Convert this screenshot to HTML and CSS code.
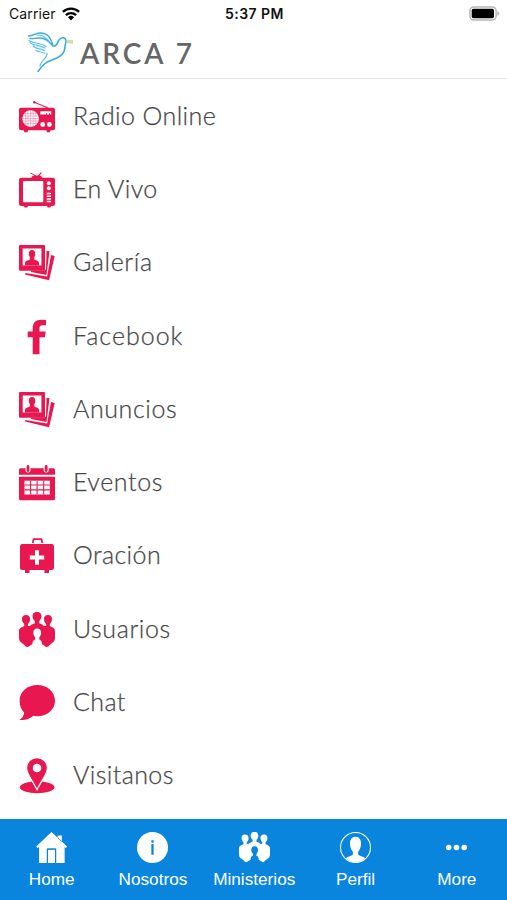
FILE: index.html
```html
<!DOCTYPE html>
<html lang="es">
<head>
    <meta charset="UTF-8">
    <meta name="viewport" content="width=device-width, initial-scale=1.0">
    <title>ARCA 7</title>
    <link rel="stylesheet" href="styles.css">
</head>
<body>
    <!-- Shared icon shapes -->
    <svg class="symbols" width="0" height="0">
        <symbol id="photos" viewBox="0 0 36 36">
            <path fill="currentColor" d="M27.5 5.700l3 .5-3 23.700L12 27v-1.500h13l2-1z"/>
            <path fill="currentColor" d="M32 10l3.700.9-5.600 24.400L6 29.500l.4-1.600 21.700 3.700z"/>
            <rect width="26" height="25.700" rx="1" fill="currentColor"/>
            <rect x="3.700" y="3.500" width="18.700" height="17" fill="#fff"/>
            <path fill="currentColor" d="M6 20.500v-2.400c0-1.800 1.200-2.200 4.900-3.600v-2.400C9.400 10.300 9 5 13 5s3.700 5.300 2.300 7.100v2.400c3.600 1.400 4.800 1.800 4.800 3.600v2.400z"/>
        </symbol>
        <symbol id="people" viewBox="0 0 36 36">
            <path fill="currentColor" d="M5.200 14.300V12C2.200 9.500 1.700 3 7 3s4.900 6.500 2 9v2l2.500-.3c1-1.400 3-2 4.300-2.500V9C12.500 6.500 12.500-.2 18-.2S23.500 6.500 20.300 9v2.200c1.300.5 3.300 1.100 4.300 2.500l2.500.3v-2c-2.900-2.500-3.400-9 1.900-9s4.800 6.500 1.900 9v2.300c4.200 1.500 5.100 2.600 5.100 5.200v6.800c0 3-2.200 4.200-4.500 6-1.700 1.400-2.200 2.700-3.800 2.700-1.400 0-2.500-1.700-4.700-2.700 0-2.800-.7-3.800-2.700-4.700v-2.400c2.900-2.900 2.400-8.600-2.100-8.600s-5 5.700-2.100 8.600v2.400c-2 .9-2.700 1.900-2.700 4.700-2.200 1-3.700 2.700-5.100 2.700-1.600 0-2.100-1.300-3.800-2.700C2.200 30.500 0 29.300 0 26.300v-6.800c0-2.600.9-3.700 5.200-5.200z"/>
        </symbol>
    </svg>

    <header>
        <div class="status-bar">
            <div class="carrier">
                <span>Carrier</span>
                <svg width="18" height="14" viewBox="0 0 18 14">
                    <g fill="none" stroke="#000" stroke-width="2.300">
                        <path d="M.9 4.900a11.700 11.700 0 0 1 16.200 0"/>
                        <path d="M3.900 8.100a7.400 7.400 0 0 1 10.200 0"/>
                    </g>
                    <path d="M6 10.200a4.300 4.300 0 0 1 6 0l-3 3.300z"/>
                </svg>
            </div>
            <div class="time">5:37 PM</div>
            <div class="battery">
                <svg width="31" height="15" viewBox="0 0 31 15">
                    <rect x=".9" y=".9" width="26.200" height="13.200" rx="4" fill="#fff" stroke="#b5b5b5" stroke-width="1.500"/>
                    <rect x="2.700" y="2.800" width="22.300" height="9.400" rx="1.700"/>
                    <path fill="#b5b5b5" d="M28.300 5.200q2 .6 2 2.300t-2 2.300z"/>
                </svg>
            </div>
        </div>
        <div class="brand">
            <svg width="48" height="42" viewBox="0 0 48 42" fill="none" stroke="#36a9e8" stroke-linecap="round">
                <path stroke-width="1.300" d="M1.500 4C7 4 8 1 13 1c8 0 11 5 13 13-4-5-8-8-13-8C8 6 6 7 3 6.500"/>
                <path stroke-width="1.100" stroke="#55b9ec" d="M10 3c6-.5 10 3 13 8M2 8.500c5 3.500 11 1.500 17 6"/>
                <path stroke-width="1.200" stroke="#5bc0ee" d="M3 10c2 4 8 2.500 15 6M6 14c3 3.500 7 2 12 4.500M9 18.500c3 2 6 1 9 3"/>
                <path stroke-width="1.500" d="M26 14c4 1 4-3 6-6 2-3 6-3 7 .5.500 2-1 3-1 6 0 7-5 11-13 13.500-7 2-10 6-14 11.500"/>
                <path stroke-width="1.200" stroke="#5bc0ee" d="M20 21c1 5-7 8-7 13"/>
                <path stroke="none" fill="#d5dfa0" d="M39.500 7.500l6.500.5v4l-6-1z"/>
            </svg>
            <span>ARCA 7</span>
        </div>
    </header>

    <main class="menu">
        <div class="item">
            <svg class="icon" viewBox="0 0 36 36">
                <path fill="currentColor" d="M2 8.700h25.500L15.700 3.900l.4-.9L30 8.700h4a2 2 0 0 1 2 2v18.600a2 2 0 0 1-2 2h-2.500L31 33.300h-3l-.7-2H9l-.6 2H5.300l-.6-2H2a2 2 0 0 1-2-2V10.700a2 2 0 0 1 2-2z"/>
                <circle cx="15.300" cy="3.200" r="1.300" fill="currentColor"/>
                <circle cx="11.600" cy="19.600" r="8.300" fill="#fff"/>
                <path stroke="currentColor" stroke-width=".3" fill="none" d="M5 14.600h13M3.500 17h16M3.300 19.500h16.500M3.500 22h16M5 24.500h13M6.600 13v13M9 11.500v16M11.600 11.300v16.500M14.200 11.500v16M16.800 13v13"/>
                <path fill="#fff" d="M21.300 12.200h10.900v3.300h-1.300v-1.400h-.8v1.400h-2v-1.400h-.8v1.400h-6z"/>
                <circle cx="23.700" cy="25.500" r="2.400" fill="#fff"/>
                <circle cx="30.400" cy="25.500" r="2.400" fill="#fff"/>
            </svg>
            <span class="label tight">Radio Online</span>
        </div>
        <div class="item">
            <svg class="icon" viewBox="0 0 36 36">
                <path fill="currentColor" d="M2 5.700h10.500c0-1.300 1-2.300 2.900-2.300L11 1.200l.5-.8 5.500 3h1.700L22 .2l.8.7-2.400 2.500c1.700 0 2.600 1 2.600 2.300h11a2 2 0 0 1 2 2v24.200a2 2 0 0 1-2 2h-2l-.7 1.700h-2.700L28 33.900H9l-.7 1.700H5.500l-.6-1.700H2a2 2 0 0 1-2-2V7.700a2 2 0 0 1 2-2z"/>
                <rect x="4" y="9" width="20.300" height="21.300" rx="1" fill="#fff"/>
                <circle cx="29.800" cy="11.300" r="2" fill="#fff"/>
                <circle cx="29.800" cy="16.300" r="2" fill="#fff"/>
                <path stroke="#fff" stroke-width="1.500" d="M27.700 21.500H32M27.700 24.200H32M27.700 26.900H32M27.700 29.600H32"/>
            </svg>
            <span class="label tight">En Vivo</span>
        </div>
        <div class="item">
            <svg class="icon"><use href="#photos"/></svg>
            <span class="label">Galería</span>
        </div>
        <div class="item">
            <svg class="icon" viewBox="0 0 36 36">
                <path fill="currentColor" d="M13.700 35.300V18.200H8.700v-5.700h5V9.200C13.700 3.500 17 .7 22 .7c2.400 0 4 .1 5 .3v5.200h-3.200c-2.600 0-3.300 1.100-3.300 3.200v3.100h6.200l-.8 5.700h-5.400v17.100z"/>
            </svg>
            <span class="label wide">Facebook</span>
        </div>
        <div class="item">
            <svg class="icon"><use href="#photos"/></svg>
            <span class="label">Anuncios</span>
        </div>
        <div class="item">
            <svg class="icon" viewBox="0 0 36 36">
                <path fill="currentColor" d="M1.500 3.300h33A1.500 1.500 0 0 1 36 4.800v5H0v-5a1.500 1.500 0 0 1 1.500-1.500zM0 11.700h36v22a1.500 1.500 0 0 1-1.500 1.500h-33A1.500 1.500 0 0 1 0 33.700z"/>
                <path stroke="#fff" stroke-width="5" stroke-linecap="round" d="M9 2v3M27.200 2v3"/>
                <path stroke="currentColor" stroke-width="2.800" stroke-linecap="round" d="M9 1.500v4M27.200 1.500v4"/>
                <path fill="#fff" d="M5.500 15.700h25.300v13.800H5.500z"/>
                <path stroke="currentColor" stroke-width="1.100" d="M11.600 15.700v13.800M18.100 15.700v13.800M24.700 15.700v13.800M5.500 20h25.300M5.500 24.900h25.300"/>
            </svg>
            <span class="label">Eventos</span>
        </div>
        <div class="item">
            <svg class="icon" viewBox="0 0 36 36">
                <path fill="none" stroke="currentColor" stroke-width="1.800" d="M13.700 5l.9-3.800h7.800l.9 3.800"/>
                <path fill="currentColor" d="M3.300 6h29.400a2.300 2.300 0 0 1 2.300 2.300v21.400a2.300 2.300 0 0 1-2.300 2.300H30v2.900h-4.500V32h-15v2.900H6V32H3.300A2.300 2.300 0 0 1 1 29.700V8.300A2.300 2.300 0 0 1 3.300 6z"/>
                <path stroke="#fff" stroke-width="4" d="M18 12.300v14.400M10.800 19.500h14.400"/>
            </svg>
            <span class="label tight">Oración</span>
        </div>
        <div class="item">
            <svg class="icon"><use href="#people"/></svg>
            <span class="label">Usuarios</span>
        </div>
        <div class="item">
            <svg class="icon" viewBox="0 0 36 36">
                <path fill="currentColor" d="M18.300 0C28.200 0 36 6.800 36 15.700s-7.800 15.500-17.700 15.500c-1.400 0-2.800-.2-4-.5C11 33.800 5.500 35.700.3 34.900c3-1.600 4.700-4.200 4.800-7.300C2.300 24.700.6 20.500.6 15.700.6 6.800 8.400 0 18.300 0z"/>
            </svg>
            <span class="label tight">Chat</span>
        </div>
        <div class="item">
            <svg class="icon" viewBox="0 0 36 36">
                <ellipse cx="18.200" cy="29.200" rx="17.300" ry="6" fill="currentColor"/>
                <path fill="currentColor" stroke="#fff" stroke-width="1.200" d="M18-.4c5.900 0 10.400 4.400 10.400 10.400 0 6.500-5.900 12-10.400 21.800C13.500 22 7.600 16.500 7.600 10 7.600 4 12.100-.4 18-.4z"/>
                <circle cx="18" cy="10" r="4.300" fill="#fff"/>
            </svg>
            <span class="label tight">Visitanos</span>
        </div>
    </main>

    <nav class="tabs">
        <div class="tab">
            <svg class="tab-icon" viewBox="0 0 30 30" fill="currentColor">
                <path d="M15 0l6 5.500V3.400h4v5.800l5 4.800-1 1.400-1.300-.8V30H19.500V16h-9v14H3V14.600l-1.500.8L.2 14z"/>
                <path d="M11.600 17.200h6.800V30h-6.800z"/>
                <path fill="none" stroke="#0985dd" stroke-width=".8" d="M21 5.500l4 3.700M11 30V16.500h8V30"/>
            </svg>
            <span>Home</span>
        </div>
        <div class="tab">
            <svg class="tab-icon" viewBox="0 0 30 30">
                <circle cx="15" cy="15" r="15" fill="currentColor"/>
                <path stroke="#0985dd" stroke-width="2.200" d="M15 11.700V22M15 8v2.300"/>
            </svg>
            <span>Nosotros</span>
        </div>
        <div class="tab">
            <svg class="tab-icon"><use href="#people"/></svg>
            <span>Ministerios</span>
        </div>
        <div class="tab">
            <svg class="tab-icon" viewBox="0 0 30 30">
                <circle cx="15" cy="15" r="14.500" fill="none" stroke="currentColor"/>
                <path fill="currentColor" d="M12.500 19.300c-2.300-2.500-3.100-6-2.800-9.300.3-3.700 2.200-5.500 5.300-5.500s5 1.800 5.300 5.500c.3 3.300-.5 6.800-2.800 9.300v2.500c1.200 1.500 4.700 2 6.900 3.500A14.200 14.200 0 0 1 15 29.200a14.200 14.200 0 0 1-9.400-3.900c2.200-1.500 5.700-2 6.900-3.500z"/>
            </svg>
            <span>Perfil</span>
        </div>
        <div class="tab">
            <svg class="tab-icon" viewBox="0 0 30 30" fill="currentColor">
                <circle cx="7.500" cy="15" r="2.700"/>
                <circle cx="15" cy="15" r="2.700"/>
                <circle cx="22.500" cy="15" r="2.700"/>
            </svg>
            <span>More</span>
        </div>
    </nav>
</body>
</html>
```
FILE: styles.css
```css
* {
    box-sizing: border-box;
}

body {
    margin: 0;
    height: 900px;
    display: flex;
    flex-direction: column;
    overflow: hidden;
    background-color: #fff;
    font-family: "Liberation Sans", Arial, sans-serif;
}

svg {
    display: block;
    flex: none;
}

.symbols {
    position: absolute;
}

header {
    height: 79px;
    border-bottom: 1px solid #e6e6e6;
}

.status-bar {
    height: 27px;
    padding: 0 7px 0 9px;
    display: grid;
    grid-template-columns: 1fr auto 1fr;
    align-items: center;
    color: #111;
    font-family: Inter, sans-serif;
    font-size: 14px;
}

.carrier {
    display: flex;
    align-items: center;
    gap: 6px;
    letter-spacing: 0.1px;
}

.time {
    font-weight: 600;
    letter-spacing: 0.45px;
}

.battery {
    justify-self: end;
}

.brand {
    display: flex;
    align-items: center;
    gap: 5px;
    height: 51px;
    padding-left: 27px;
    color: #666;
    font-family: Lato, sans-serif;
    font-size: 28px;
    font-weight: 600;
    letter-spacing: 3px;
}

.menu {
    flex: 1;
    padding-top: 1px;
}

.item {
    display: flex;
    align-items: center;
    height: 73.3px;
    padding-left: 19px;
    gap: 18px;
    color: #484848;
    font-family: Lato, sans-serif;
    font-size: 25px;
    font-weight: 300;
}

.icon {
    width: 36px;
    height: 36px;
    color: #e91750;
}

.label {
    padding-bottom: 4px;
    letter-spacing: 0.6px;
    -webkit-text-stroke: 0.25px #484848;
}

.label.tight {
    letter-spacing: 0.4px;
}

.label.wide {
    letter-spacing: 1px;
}

.tabs {
    display: grid;
    grid-template-columns: repeat(5, 101.3px);
    height: 81px;
    padding: 13px 0 0 1px;
    background-color: #0985dd;
    color: #fff;
}

.tab {
    display: flex;
    flex-direction: column;
    align-items: center;
    gap: 6px;
    font-size: 17.2px;
    line-height: 20px;
}

.tab-icon {
    width: 31px;
    height: 31px;
}
```
